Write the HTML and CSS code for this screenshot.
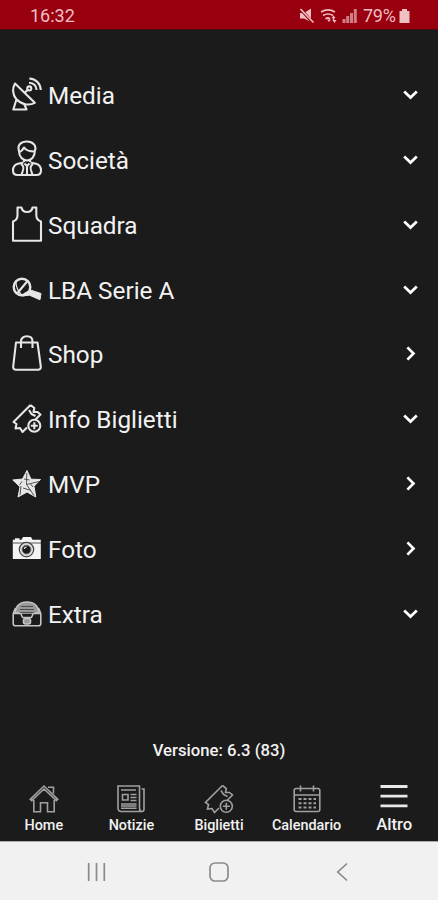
FILE: index.html
```html
<!DOCTYPE html>
<html lang="it">

<head>
    <meta charset="UTF-8">
    <title>Altro</title>
    <link rel="stylesheet" href="styles.css">
</head>

<body>
    <!-- shared shapes -->
    <svg class="defs" width="0" height="0">
        <symbol id="down" viewBox="0 0 20 20">
            <path d="M4.2 6.6L10.5 12.6L16.8 6.6" />
        </symbol>
        <symbol id="right" viewBox="0 0 20 20">
            <path d="M7.4 3.4L13.5 9.5L7.4 15.6" />
        </symbol>
        <symbol id="ticket" viewBox="0 0 30 30">
            <path d="M18.5 1.5L1.5 18.5L4.5 20.5L3.5 25L8 24.5L10.5 28.5L15 24M18.5 1.5L22.3 4.5L21.5 8.5L25.5 8.5L28.5 11L23.5 16M17 6.5L19.5 10.5L23.5 12.5" />
            <circle cx="22.3" cy="22.3" r="6" />
            <path d="M22.3 18.8V25.8M18.8 22.3H25.8" />
        </symbol>
    </svg>

    <div class="statusbar">
        <span class="clock">16:32</span>
        <svg class="signals" width="61" height="18" viewBox="0 0 61 18">
            <path d="M0 6H4L11 1.5V15L4 11.5H0Z" />
            <path class="cut" d="M1 2.5L13 16" />
            <path class="line" d="M.5 2L13.5 15.5" />
            <path class="line" d="M21 5Q28 .8 35 5M23 8.5Q28 5.5 33 8.5M25.5 11.8Q28 10 30 11.8" />
            <path d="M27 12.5H31L29 15ZM31.5 11L33.5 8.5L35.5 11H34.3V13H36.5L34.5 16L32.5 13H32.7V11Z" />
            <path class="dim" d="M42.5 12H45.5V16H42.5ZM46.2 9H49.2V16H46.2ZM50 6H53V16H50ZM53.8 2H56.8V16H53.8Z" />
        </svg>
        <span class="percent">79%</span>
        <svg class="battery" width="11" height="16" viewBox="0 0 11 16">
            <path d="M3 1H8V3H10.5V15H.5V3H3Z" />
        </svg>
    </div>

    <div class="menu">
        <div class="item">
            <svg class="icon" viewBox="0 0 30 36">
                <path d="M3 6.5L22.8 25.8C17 29 9 27.5 4.2 22C.4 17 .5 11 3 6.5Z" />
                <path d="M4.3 23L1.3 32.5H14.5L12.3 27M12.5 16L15.7 12.8" />
                <circle cx="17.3" cy="11.4" r="2" />
                <path d="M17.3 1.5C24 1.8 28.5 6.5 28.8 13M17 5.8C21.5 6 24.3 8.8 24.6 13" />
            </svg>
            <span class="label">Media</span>
            <svg class="arrow"><use href="#down" /></svg>
        </div>
        <div class="item">
            <svg class="icon" viewBox="0 0 30 36">
                <path d="M7 9C5 3 9-.5 15-.5S25 4 22.8 9C23 15 19 18.5 15 18.5S7 15 7 9Z" />
                <path d="M7.5 10C10 9 11 7.5 12 5.5C14 8.5 19 9.5 22.5 9.5M12 18V20M18 18V20" />
                <path d="M11.5 20.5L6 21.8C2.5 22.7 1 25 1 28.5C1 31.5 2.5 33 5.5 33H24.5C27.5 33 29 31.5 29 28.5C29 25 27.5 22.7 24 21.8L18.5 20.5" />
                <path d="M9 22C14 25 10 30 9.5 33M21 22C16 25 20 30 20.5 33M12.5 21.5L15 24L17.5 21.5M15 24V33" />
            </svg>
            <span class="label">Società</span>
            <svg class="arrow"><use href="#down" /></svg>
        </div>
        <div class="item">
            <svg class="icon" viewBox="0 0 30 36">
                <path d="M5.5 .5H9.5C10 3.5 12 5 15 5S20 3.5 20.5 .5H24.3V8C24.3 12 26 13.5 29 14.5V33.7H1V14.5C4 13.5 5.5 12 5.5 8Z" />
            </svg>
            <span class="label">Squadra</span>
            <svg class="arrow"><use href="#down" /></svg>
        </div>
        <div class="item">
            <svg class="icon" viewBox="0 0 30 36">
                <ellipse class="ball" cx="10" cy="15" rx="8.3" ry="8.3" />
                <path d="M5.5 21L15.5 9" />
                <path class="thin" d="M4 10C4 15 6 19 9 22" />
                <path class="solid" d="M12 21.5L18.5 18L29 21.5L28 27.8L17.5 23.2L10 24Z" />
            </svg>
            <span class="label">LBA Serie A</span>
            <svg class="arrow"><use href="#down" /></svg>
        </div>
        <div class="item">
            <svg class="icon" viewBox="0 0 30 36">
                <path d="M4 6.5H25.5L28.8 30.5C29 32.5 28 33.7 26 33.7H4C2 33.7 1 32.5 1.2 30.5ZM9 12V5.5C9 2 11.5 .3 14.8 .3S20.5 2 20.5 5.5V12" />
            </svg>
            <span class="label">Shop</span>
            <svg class="arrow"><use href="#right" /></svg>
        </div>
        <div class="item">
            <svg class="icon" viewBox="0 0 30 36"><use href="#ticket" y="2.5" width="30" height="30" /></svg>
            <span class="label">Info Biglietti</span>
            <svg class="arrow"><use href="#down" /></svg>
        </div>
        <div class="item">
            <svg class="icon" viewBox="0 0 30 36">
                <path class="solid" d="M15 4.5L19 13.2L28.5 13.5L22 20.3L23.8 31L15 26L6 31L8 20.8L.8 14L10.5 13Z" />
                <path class="crease" d="M14.8 7L14.5 18.5M14.5 18.5L27 15.5M14.5 18.5L22 29.5M9 20L8 29M10 15.5L7.5 19M18.5 18L21 21M12 13L17.5 14M11 22L19 24.5" />
            </svg>
            <span class="label">MVP</span>
            <svg class="arrow"><use href="#right" /></svg>
        </div>
        <div class="item">
            <svg class="icon" viewBox="0 0 30 36">
                <path class="fill" d="M.8 8.8H3V7.3H7.5V8.8H9.5L11 6H19L20.5 8.8H28.8V28H.8Z" />
                <path class="crease" d="M1 12H29" />
                <circle class="lens" cx="14.5" cy="18.6" r="7.2" />
                <circle class="dark" cx="14.5" cy="18.6" r="4.4" />
                <path class="thin" d="M12.3 18C12.5 16.8 13.5 16.2 14.5 16.2" />
            </svg>
            <span class="label">Foto</span>
            <svg class="arrow"><use href="#right" /></svg>
        </div>
        <div class="item">
            <svg class="icon soft" viewBox="0 0 30 36">
                <path class="top" d="M3 17C4 8.5 8 6 15 6S26 8.5 27 17Z" />
                <path class="crease" d="M9 10.5H21M8 13.5H22M7.5 16.5H22.5" />
                <path d="M1.2 17.5H8.8L10.5 21.5H19.5L21.2 17.5H28.8V27.5C28.8 29 28 29.8 26.5 29.8H3.5C2 29.8 1.2 29 1.2 27.5ZM1.2 17.5L3.5 12M28.8 17.5L26.5 12" />
                <rect class="top" x="11.5" y="22.5" width="7" height="5.5" rx="2" />
            </svg>
            <span class="label">Extra</span>
            <svg class="arrow"><use href="#down" /></svg>
        </div>
    </div>

    <div class="version">Versione: 6.3 (83)</div>

    <div class="tabs">
        <div class="tab">
            <svg class="tabicon" viewBox="0 0 30 30">
                <path d="M1.2 15.3L15 2L28.8 15.3L27.3 16.7L15 5L2.7 16.7ZM4.8 16V27.7H11.5V18.8H18.5V27.7H25.2V16M19 3.3H24.5V9.5" />
            </svg>
            <span>Home</span>
        </div>
        <div class="tab">
            <svg class="tabicon" viewBox="0 0 30 30">
                <path d="M2 2H23.5V24C23.5 26 24 27.5 26 27.5H5.5C3 27.5 2 26 2 24ZM25.5 5H28V25C28 27 27 27.5 26 27.5C24 27.5 23.5 26 23.5 24" />
                <path d="M5 6H20M6.5 10.5H12V16H6.5ZM14.5 10.5H20.5M14.5 13.5H20.5M14.5 16.5H20.5M5 20H20.5M5 22H20.5M5 24.3H20.5" />
            </svg>
            <span>Notizie</span>
        </div>
        <div class="tab">
            <svg class="tabicon" viewBox="0 0 30 30"><use href="#ticket" /></svg>
            <span>Biglietti</span>
        </div>
        <div class="tab">
            <svg class="tabicon" viewBox="0 0 30 30">
                <rect x="2.2" y="4.5" width="25.6" height="23" rx="2" />
                <path d="M2 11H28M8.5 1.5V7.5M21.5 1.5V7.5" />
                <path class="days" d="M6.5 15H24M6.5 19.3H24M6.5 23.5H24" />
            </svg>
            <span>Calendario</span>
        </div>
        <div class="tab active">
            <svg class="tabicon" viewBox="0 0 30 30">
                <path d="M1.5 2.5H28.5M1.5 12.2H28.5M1.5 21.9H28.5" />
            </svg>
            <span>Altro</span>
        </div>
    </div>

    <div class="navbar">
        <svg width="20" height="20" viewBox="0 0 20 20"><path d="M2.7 1V19M10.5 1V19M18.3 1V19" /></svg>
        <svg width="20" height="20" viewBox="0 0 20 20"><rect x="1" y="1" width="18" height="18" rx="5" /></svg>
        <svg width="20" height="20" viewBox="0 0 20 20"><path d="M15 1.5L5.8 10L15 18.5" /></svg>
    </div>
</body>

</html>
```
FILE: styles.css
```css
body {
    margin: 0;
    width: 438px;
    height: 900px;
    display: flex;
    flex-direction: column;
    overflow: hidden;
    background-color: #1b1b1b;
    color: #f2f2f2;
    font-family: Roboto, "Liberation Sans", sans-serif;
}

svg {
    fill: none;
    flex-shrink: 0;
}

.defs {
    display: none;
}

.statusbar {
    height: 30px;
    box-sizing: border-box;
    padding: 2px 28px 0 30px;
    display: flex;
    align-items: center;
    background-color: #98000f;
    border-bottom: 1px solid #4a0a10;
    color: #f0bfc2;
    font-size: 18px;
}

.clock {
    margin-right: auto;
}

.signals, .battery {
    fill: #f0bfc2;
}

.signals .line {
    fill: none;
    stroke: #f0bfc2;
    stroke-width: 1.6;
}

.signals .cut {
    stroke: #98000f;
    stroke-width: 3;
}

.signals .dim {
    fill: #d07d84;
}

.percent {
    margin-left: 2px;
    width: 36px;
    letter-spacing: -0.3px;
}

.menu {
    padding-top: 32.4px;
}

.item {
    height: 64.9px;
    padding: 0 18px 0 12px;
    display: flex;
    align-items: center;
}

.icon {
    width: 30px;
    height: 36px;
    overflow: visible;
    stroke: #e6e6e6;
    stroke-width: 2.1;
    stroke-linejoin: round;
}

.icon .thin {
    stroke-width: 1.2;
}

.icon .ball {
    stroke-width: 2.4;
}

.icon .solid {
    fill: #e6e6e6;
    stroke-width: 1;
}

.icon .fill {
    fill: #f4f4f4;
    stroke: none;
}

.icon .crease {
    stroke: #444;
    stroke-width: 0.9;
}

.icon .lens {
    fill: #ddd;
    stroke: #444;
    stroke-width: 1.2;
}

.icon .dark {
    fill: #1b1b1b;
    stroke: #777;
    stroke-width: 1;
}

.soft {
    stroke: #c4c4c4;
    stroke-width: 1.6;
}

.soft .top {
    fill: #999;
}

.label {
    flex: 1;
    margin-left: 6px;
    padding-top: 1px;
    font-size: 24.3px;
}

.arrow {
    width: 20px;
    height: 20px;
    stroke: #fff;
    stroke-width: 2.7;
}

.version {
    margin-top: auto;
    height: 20px;
    line-height: 20px;
    text-align: center;
    font-size: 16.7px;
    font-weight: 500;
}

.tabs {
    height: 80px;
    display: flex;
}

.tab {
    flex: 1;
    padding-top: 23px;
    display: flex;
    flex-direction: column;
    align-items: center;
    font-size: 14.4px;
    line-height: 18px;
    font-weight: 500;
}

.tabicon {
    width: 30px;
    height: 30px;
    margin-bottom: 3px;
    stroke: #a0a0a0;
    stroke-width: 1.6;
}

.tabicon .days {
    stroke-width: 2;
    stroke-dasharray: 3 2;
}

.active {
    font-size: 16.7px;
}

.active .tabicon {
    margin-bottom: 2px;
    stroke: #e8e8e8;
    stroke-width: 2.8;
}

.navbar {
    height: 59px;
    box-sizing: border-box;
    padding: 2px 86px 0;
    display: flex;
    align-items: center;
    justify-content: space-between;
    background-color: #f1f1f1;
    border-top: 1px solid #aaa;
    stroke: #8a8a8a;
    stroke-width: 1.7;
}
```
